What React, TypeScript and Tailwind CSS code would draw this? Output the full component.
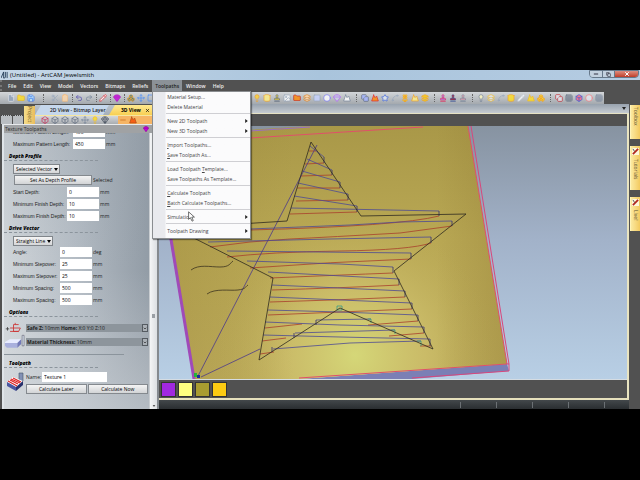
import { Fragment } from "react"
import { Box, Boxes, ChevronDown, Circle, Clipboard, Copy, Cylinder, Diamond, File, Folder, Flower2, Gem, Grid3x3, Hexagon, Image, Layers, Lightbulb, Minus, Mountain, Move, Pencil, Redo2, Save, Scissors, Spline, Square, Stamp, Star, Sun, Undo2, X } from "lucide-react"
import type { LucideIcon } from "lucide-react"

type Tool = [LucideIcon, string, string]

const toolGroups: { tools: Tool[]; gap: string }[] = [
    { gap: "w-[14px]", tools: [[File, "text-slate-100 fill-slate-400", "New"], [Folder, "text-yellow-500 fill-yellow-300", "Open"], [Save, "text-blue-600 fill-sky-200", "Save"]] },
    { gap: "w-[4px]", tools: [[Scissors, "text-slate-400", "Cut"], [Clipboard, "text-orange-300 fill-orange-200", "Paste"]] },
    { gap: "w-[4px]", tools: [[Undo2, "text-indigo-800", "Undo"], [Redo2, "text-slate-500", "Redo"]] },
    { gap: "w-[4px]", tools: [[Pencil, "text-red-600 fill-white", "Notes"]] },
    { gap: "w-[4px]", tools: [[Gem, "text-fuchsia-700 fill-fuchsia-600", "Reference help"]] },
    {
        gap: "w-[6px]",
        tools: [
            [Boxes, "text-amber-500 fill-sky-700", "Model"], [Move, "text-blue-500", "Move"], [Square, "text-blue-500", "Rectangle"], [Circle, "text-blue-500", "Circle"],
            [Hexagon, "text-blue-500", "Polygon"], [Spline, "text-blue-500", "Polyline"], [Grid3x3, "text-slate-500", "Grid"], [Copy, "text-slate-500", "Copy"],
            [Layers, "text-amber-500", "Layers"], [Diamond, "text-amber-500", "Facet"], [Sun, "text-amber-500", "Light"], [Image, "text-slate-500", "Image"],
        ],
    },
    {
        gap: "w-[8px]",
        tools: [
            [Lightbulb, "text-amber-500 fill-amber-300", "Relief light"], [Cylinder, "text-amber-500 fill-yellow-200", "Cylinder"], [Stamp, "text-slate-600 fill-yellow-300", "Stamp"],
            [Image, "text-slate-400 fill-white", "Import image"], [Folder, "text-red-700 fill-orange-400", "Merge"], [Layers, "text-amber-600 fill-orange-200", "Layers"],
            [Square, "text-slate-400 fill-indigo-200", "Smooth"], [Circle, "text-indigo-500 fill-white", "Dome"], [Gem, "text-purple-500 fill-slate-300", "Gem"], [Mountain, "text-slate-500 fill-white", "Sculpt"],
        ],
    },
    {
        gap: "w-[8px]",
        tools: [
            [Copy, "text-slate-600 fill-indigo-300", "Block copy"], [Mountain, "text-red-600 fill-orange-400", "Texture"], [Star, "text-blue-700 fill-slate-200", "Star"],
            [Spline, "text-slate-400", "Sweep"], [Flower2, "text-amber-500 fill-yellow-300", "Turn"], [Mountain, "text-amber-500 fill-yellow-200", "Spin"], [Layers, "text-amber-500 fill-yellow-400", "Weave"],
        ],
    },
    { gap: "w-[8px]", tools: [[Stamp, "text-rose-600 fill-violet-400", "Ring"], [Stamp, "text-blue-900 fill-red-700", "Setting"], [Stamp, "text-slate-500 fill-rose-300", "Claw"]] },
    {
        gap: "w-[8px]",
        tools: [
            [Lightbulb, "text-slate-500 fill-yellow-100", "Preview"], [Layers, "text-amber-400 fill-slate-200", "Stack"], [Spline, "text-slate-400", "Trace"], [Cylinder, "text-amber-500 fill-yellow-300", "Disc"],
            [Pencil, "text-slate-300 fill-white", "Draw"], [Mountain, "text-amber-400 fill-yellow-300", "Tube"], [Boxes, "text-amber-500 fill-yellow-300", "Blocks"],
        ],
    },
    {
        gap: "w-0",
        tools: [
            [Copy, "text-red-700 fill-slate-200", "Machine"], [Grid3x3, "text-slate-600", "Nest"], [Box, "text-blue-700 fill-rose-400", "Simulate"],
            [Circle, "text-red-400 fill-slate-200", "Drill"], [Grid3x3, "text-slate-500", "Array"],
        ],
    },
]

const viewTools: Tool[] = [
    [Box, "text-rose-700", "Isometric view"], [Box, "text-slate-600", "View along X"], [Box, "text-slate-600", "View along Y"], [Box, "text-slate-600", "View along Z"],
    [Move, "text-slate-500", "Fit"], [Lightbulb, "text-amber-400 fill-yellow-300", "Shading"], [Gem, "text-slate-800", "Draw"],
]

const menuBar = ["File", "Edit", "View", "Model", "Vectors", "Bitmaps", "Reliefs", "Toolpaths", "Window", "Help"]

// "_" marks the letter that is underlined, ">" an entry with a submenu
const menuItems = [
    ["Material Setup...", "Delete Material"],
    ["New 2D Toolpath>", "New 3D Toolpath>"],
    ["_Import Toolpaths...", "_Save Toolpath As..."],
    ["Load Toolpath _Template...", "Save Toolpaths As Template..."],
    ["_Calculate Toolpath", "_Batch Calculate Toolpaths..."],
    ["Simulation>"],
    ["Toolpath Drawing>"],
]

const bluePasses = [
    "M310 146L324 157", "M307 159L332 170", "M302 171L340 182", "M298 183L348 194", "M294 196L357 206", "M291 208L439 211",
    "M250 229L350 225L400 222L452 221", "M208 242L330 239L431 237", "M227 251L411 253", "M247 261L340 264L393 267", "M268 272L399 279",
    "M272 285L340 288L405 291", "M270 297L412 303", "M268 310L340 312L418 315", "M265 322L340 325L424 327", "M263 335L340 337L430 339",
    "M316 320L371 319", "M295 333L395 330", "M273 349L350 343L421 341",
]
const redPasses = [
    "M309 151H316", "M305 164L324 163", "M301 176L332 175", "M297 188H340", "M296 201L348 200", "M290 214L357 212",
    "M250 230Q400 226 439 216", "M210 247Q250 241 290 239T400 233L452 226", "M227 257Q270 252 340 251T431 243", "M250 268Q330 262 411 259",
    "M270 278Q340 275 393 273", "M272 290Q340 288 399 285", "M270 302Q340 300 405 297", "M268 315Q340 312 412 309", "M265 328L302 324M368 325L418 321",
    "M262 341L286 338M389 336L424 333", "M260 354L274 352M420 346H431",
]
// short moves that join one pass to the next
const steps = "M324 157V163M332 170V175M340 182V188M348 194V200M357 206V212M439 211V216M452 221V226M431 237V243M411 253V259M393 267V273M399 279V285M405 291V297M412 303V309M418 315V321M424 327V333M430 339V346M316 320V325M294 333V338M272 347V352"

const swatches = ["bg-[#a128e0]", "bg-[#ffff80]", "bg-[#a99c30]", "bg-[#fccb12]"]

function ToolButton({ tool }: { tool: Tool }) {
    const [Icon, color, label] = tool
    return (
        <button aria-label={label} className="flex w-[10px] shrink-0 justify-center opacity-80">
            <Icon className={`size-[8px] ${color}`} strokeWidth={2} />
        </button>
    )
}

function MenuItem({ label }: { label: string }) {
    const more = label.endsWith(">")
    const text = label.replace(">", "")
    const at = text.indexOf("_")
    return (
        <button className="flex h-[10px] w-full items-center justify-between whitespace-nowrap pl-[14px] pr-[2px] text-left text-[#444]">
            <span>
                {at < 0 ? text : <>{text.slice(0, at)}<u>{text[at + 1]}</u>{text.slice(at + 2)}</>}
            </span>
            {more && <svg viewBox="0 0 4 6" className="h-[4px] w-[3px]"><path d="M0 0L4 3L0 6Z" fill="#222" /></svg>}
        </button>
    )
}

function ToolpathsMenu() {
    return (
        <div className="absolute left-0 top-full z-20 w-[99px] border border-[#8a8d90] bg-linear-to-r from-[#e9eaee] from-[12px] to-[#fbfbfc] to-[13px] pb-[2px] shadow-[1px_1px_1px_#0006]">
            {menuItems.map((group, i) => (
                <Fragment key={i}>
                    {i > 0 && <div className="my-[1px] ml-[13px] h-[2px] border-t border-[#cfcfd3]"></div>}
                    {group.map((label) => <MenuItem key={label} label={label} />)}
                </Fragment>
            ))}
            <svg viewBox="0 0 12 18" className="absolute left-[35px] top-[119px] h-[11px] w-[7px]">
                <path d="M1 1V14L4 11L7 17L9 16L6.500 10H11Z" fill="#fff" stroke="#333" strokeWidth="1.200" />
            </svg>
        </div>
    )
}

function Field({ label, value, unit, width }: { label: string; value: string; unit: string; width: string }) {
    return (
        <label className="flex h-[12px] items-center whitespace-nowrap pl-[9px]">
            <span className={`font-['Liberation_Sans',sans-serif] ${width}`}>{label}</span>
            <input defaultValue={value} className="h-[10px] w-[32px] bg-white px-[2px] text-black" />
            <span className="pl-[1px]">{unit}</span>
        </label>
    )
}

function Heading({ children }: { children: string }) {
    return <h2 className="mt-[2px] flex h-[9px] w-[94px] items-center border-b border-dashed border-[#8b949c] pl-[5px] font-extrabold italic text-black">{children}</h2>
}

function Choice({ label, value, width }: { label: string; value: string; width: string }) {
    return (
        <div className={`relative ml-[9px] mt-[3px] ${width}`}>
            <select aria-label={label} className="block h-[10px] w-full appearance-none border border-[#80858a] bg-linear-to-b from-[#f5f5f5] to-[#d5d6d8] px-[2px] text-black">
                <option>{value}</option>
            </select>
            <svg viewBox="0 0 4 3" className="pointer-events-none absolute right-[2px] top-[4px] h-[3px] w-[4px]"><path d="M0 0H4L2 3Z" /></svg>
        </div>
    )
}

const panelButton = "h-[10px] border border-[#84898e] bg-linear-to-b from-[#f4f4f4] to-[#d2d4d6] text-center text-black"

function SummaryBar({ name, children }: { name: string; children: React.ReactNode }) {
    return (
        <div className="flex h-[8px] flex-1 items-center bg-[#8d959c]">
            <span className="flex-1 pl-[1px]">{children}</span>
            <button aria-label={`Expand ${name}`} className="flex h-[8px] w-[6px] items-center justify-center border border-[#555b61] bg-[#aab0b6]">
                <ChevronDown className="size-[5px]" strokeWidth={4} />
            </button>
        </div>
    )
}

function TexturePanel() {
    return (
        <section className="ml-[2px] flex flex-1 flex-col border-l-2 border-[#dfe4e8] bg-[#eceef0]">
            <header className="flex h-[9px] items-center justify-between border-t border-[#e8eaec] bg-[#a0a2a4] pl-[1px] pr-[10px] text-[#333]">
                <h1 className="font-['Noto_Sans','Open_Sans',sans-serif]">Texture Toolpaths</h1>
                <Gem className="size-[6px] fill-fuchsia-600 text-fuchsia-800" />
            </header>
            <div className="flex flex-1">
                <div className="flex-1 bg-linear-to-r from-[#d1d6da] via-[#b4bcc4] to-[#929ca6]">
                    <div className="h-[276px] overflow-hidden bg-linear-to-b from-[#929ca640] via-transparent to-[#d5d9dd80]">
                        <div className="-mt-[7px]">
                            <Field label="Minimum Pattern Length:" value="450" unit="mm" width="w-[60px]" />
                            <Field label="Maximum Pattern Length:" value="450" unit="mm" width="w-[60px]" />
                        </div>
                        <Heading>Depth Profile</Heading>
                        <Choice label="Depth profile" value="Selected Vector" width="w-[47px]" />
                        <div className="my-[1px] flex items-center pl-[10px]">
                            <button className={`w-[78px] ${panelButton}`}>Set As Depth Profile</button>
                            <span className="pl-[1px]">Selected</span>
                        </div>
                        <Field label="Start Depth:" value="0" unit="mm" width="w-[54px]" />
                        <Field label="Minimum Finish Depth:" value="10" unit="mm" width="w-[54px]" />
                        <Field label="Maximum Finish Depth:" value="10" unit="mm" width="w-[54px]" />
                        <Heading>Drive Vector</Heading>
                        <Choice label="Drive vector" value="Straight Line" width="w-[40px]" />
                        <Field label="Angle:" value="0" unit="deg" width="w-[47px]" />
                        <Field label="Minimum Stepover:" value="25" unit="mm" width="w-[47px]" />
                        <Field label="Maximum Stepover:" value="25" unit="mm" width="w-[47px]" />
                        <Field label="Minimum Spacing:" value="500" unit="mm" width="w-[47px]" />
                        <Field label="Maximum Spacing:" value="500" unit="mm" width="w-[47px]" />
                        <Heading>Options</Heading>
                        <div className="mt-[4px] flex h-[14px] items-center pr-[1px]">
                            <svg viewBox="0 0 22 14" className="h-[12px] w-[22px] pr-[3px]" fill="none">
                                <path d="M2 8H6M4 6V10" stroke="#444" />
                                <path d="M17 3H11V11H17L19 7H7M7 11H17M13 3V1" stroke="#c33" />
                            </svg>
                            <SummaryBar name="home position"><b>Safe Z:</b> 10mm <b>Home:</b> X:0 Y:0 Z:10</SummaryBar>
                        </div>
                        <div className="flex h-[14px] items-center pr-[1px]">
                            <svg viewBox="0 0 22 16" className="h-[16px] w-[22px] shrink-0 pr-[1px]">
                                <path d="M1 8L6 5H18L14 9H1Z" fill="#e8ecff" />
                                <path d="M1 9H14V14H3L1 12Z" fill="#a9b0dd" />
                                <path d="M14 9L18 5V10L14 14Z" fill="#7279b8" />
                                <path d="M19 1H21V12H19Z" fill="#dde6f2" stroke="#667" strokeWidth=".7" />
                            </svg>
                            <SummaryBar name="material"><b>Material Thickness:</b> 10mm</SummaryBar>
                        </div>
                        <hr className="mb-[4px] mt-[5px] w-[120px] border-[#8b949c]" />
                        <Heading>Toolpath</Heading>
                        <div className="mt-[4px] flex pr-[1px]">
                            <svg viewBox="0 0 20 20" className="h-[20px] w-[22px] shrink-0">
                                <path d="M14 1H18V9H14Z" fill="#8291b5" stroke="#456" strokeWidth=".6" />
                                <path d="M2 10L8 5L18 9L11 15Z" fill="#fff" />
                                <path d="M2 10L11 15V19L2 14Z" fill="#4b57a0" />
                                <path d="M11 15L18 9V13L11 19Z" fill="#27306c" />
                                <path d="M3 9L12 14M5 8L13 12M6 7L15 11M8 6L16 10" stroke="#d22" strokeWidth="1.200" />
                            </svg>
                            <div className="flex-1">
                                <label className="flex h-[10px] items-center">
                                    <span className="w-[16px]">Name:</span>
                                    <input defaultValue="Texture 1" className="h-[10px] w-[65px] bg-white px-[2px] text-black" />
                                </label>
                                <div className="mt-[2px] grid grid-cols-2 gap-px">
                                    <button className={panelButton}>Calculate Later</button>
                                    <button className={panelButton}>Calculate Now</button>
                                </div>
                            </div>
                        </div>
                    </div>
                </div>
                <div className="flex w-[8px] flex-col items-center justify-end border-l border-[#c8ccd0] bg-linear-to-r from-[#f4f5f6] to-[#dcdfe2]">
                    <div className="mb-[87px] h-[4px] w-[3px] bg-[#9a9fa4]"></div>
                    <svg viewBox="0 0 4 3" className="mb-[2px] h-[2px] w-[4px]"><path d="M0 0H4L2 3Z" fill="#555" /></svg>
                </div>
                <div className="w-[2px] bg-[#858a8f]"></div>
            </div>
        </section>
    )
}

function LeftColumn() {
    return (
        <div className="flex w-[159px] shrink-0 flex-col">
            <div className="flex h-[20px] overflow-hidden">
                <div className="flex w-[24px] items-end gap-px pl-[1px]">
                    <div className="h-[9px] w-[11px] border-t border-dotted border-[#444] bg-[#b9bdc1]"></div>
                    <div className="h-[9px] w-[10px] border-t border-dotted border-[#444] bg-[#b9bdc1]"></div>
                </div>
                <button className="mt-[2px] flex h-[18px] w-[11px] items-center bg-linear-to-r from-[#f5dc8a] to-[#e9bd5c] text-[#6b5a2a] [writing-mode:vertical-rl]">Project</button>
                <div className="flex-1 pt-[1px]">
                    <div className="flex h-[10px] bg-linear-to-b from-[#b9c2cc] to-[#a5afb9]">
                        <button className="w-[74px] whitespace-nowrap bg-[#c5d7ec] pl-[15px] text-left font-semibold text-[#222] [clip-path:polygon(6px_0,100%_0,calc(100%-6px)_100%,0_100%)]">2D View - Bitmap Layer</button>
                        <button className="flex w-[46px] items-center gap-[4px] bg-linear-to-b from-[#ffe98f] to-[#f8cf51] pl-[12px] font-bold text-black [clip-path:polygon(6px_0,100%_0,100%_100%,0_100%)]">
                            <span className="whitespace-nowrap">3D View</span>
                            <X className="size-[5px] shrink-0" strokeWidth={3} />
                        </button>
                    </div>
                    <div className="flex h-[9px] items-center border-t border-[#f5e6a0] bg-linear-to-b from-[#d5d8db] to-[#a9adb1] pl-[5px]">
                        {viewTools.map((tool) => <ToolButton key={tool[2]} tool={tool} />)}
                        <div className="ml-[8px] flex h-full flex-1 items-center bg-[#f6b565]">
                            <ToolButton tool={[Minus, "text-amber-700", "Show plane"]} />
                            <ToolButton tool={[Mountain, "text-orange-800 fill-orange-600", "Show relief"]} />
                        </div>
                    </div>
                </div>
            </div>
            <TexturePanel />
        </div>
    )
}

function Viewport() {
    return (
        <svg viewBox="159 126 468 253" className="block w-full" fill="none" role="img" aria-label="Star shaped texture toolpath on a gold relief">
            <defs>
                <linearGradient id="sky" x1="0" y1="0" x2="0" y2="1">
                    <stop offset="0" stopColor="#8793a1" />
                    <stop offset=".45" stopColor="#a2b2c9" />
                    <stop offset="1" stopColor="#b8cfe5" />
                </linearGradient>
                <linearGradient id="gold" x1="0" y1="0" x2="0" y2="1">
                    <stop offset="0" stopColor="#a99848" />
                    <stop offset=".45" stopColor="#b9a854" />
                    <stop offset="1" stopColor="#bfae5c" />
                </linearGradient>
                <radialGradient id="shine" gradientUnits="userSpaceOnUse" cx="355" cy="355" r="140">
                    <stop offset="0" stopColor="#d5d778" />
                    <stop offset=".5" stopColor="#cec06c" stopOpacity=".75" />
                    <stop offset="1" stopColor="#c0b05c" stopOpacity="0" />
                </radialGradient>
                <linearGradient id="shade" x1="0" y1="0" x2="1" y2="0">
                    <stop offset="0" stopColor="#8c7530" stopOpacity=".3" />
                    <stop offset=".4" stopColor="#8c7530" stopOpacity="0" />
                    <stop offset=".8" stopColor="#8c7530" stopOpacity="0" />
                    <stop offset="1" stopColor="#8c7530" stopOpacity=".35" />
                </linearGradient>
            </defs>
            <path d="M159 126H627V379H159Z" fill="url(#sky)" />
            <path d="M299 379L507 364L509 371L412 379Z" fill="#7b7fb5" />
            <path d="M152 136L310 126H468L507 364L299 379H194Z" fill="url(#gold)" />
            <path d="M152 136L310 126H468L507 364L299 379H194Z" fill="url(#shine)" />
            <path d="M152 136L310 126H468L507 364L299 379H194Z" fill="url(#shade)" />
            <path d="M154 136L194 379" stroke="#a04ab8" strokeWidth="3" />
            <path d="M250 131L310 127" stroke="#9a6fc0" />
            <path d="M250 138L423 127M468 126L507 364L299 378" stroke="#e0506a" />
            <path d="M471 126L509 364V371L412 378M507 364H509" stroke="#d8477c" />
            <g strokeWidth=".8">
                {redPasses.map((d) => <path key={d} d={d} stroke="#a8402c" />)}
                {bluePasses.map((d) => <path key={d} d={d} stroke="#4c4a94" />)}
                <path d={steps} stroke="#33306c" />
                <path d="M198 376L317 145M201 377L260 349" stroke="#4b3a8c" />
                <path d="M337 306H342V310H337ZM368 319H371V323M391 330H395V334M417 341H421V346" stroke="#3a9a86" />
                <path d="M311 142L361 216L466 214L394 271L433 349L340 308L259 360L273 278L180 231L240 224L287 221Z" stroke="#2e2a20" />
                <path d="M191 270C199 264 210 267 220 267S230 263 233 261M207 294C215 288 230 291 238 290S245 287 248 285" stroke="#3c3420" />
            </g>
            <path d="M194 373H197V377H194Z" fill="#25b53a" />
            <path d="M197 375H200V378H197Z" fill="#1a2c9c" />
        </svg>
    )
}

function SideTab({ label, marked, height }: { label: string; marked?: boolean; height: string }) {
    return (
        <button className={`flex items-center border-l border-[#fff3b8] bg-linear-to-r from-[#fbe9a0] to-[#f3ca5e] pt-[2px] text-[#5b5030] [writing-mode:vertical-rl] ${height}`}>
            {marked && (
                <svg viewBox="0 0 8 8" className="mb-[4px] size-[7px]">
                    <path d="M0 0H8V8H0Z" fill="#fdf6dc" />
                    <path d="M1 7L7 1" stroke="#b3261e" strokeWidth="2" />
                    <path d="M1 1L3 4" stroke="#444" />
                </svg>
            )}
            {label}
        </button>
    )
}

export default function App() {
    return (
        <div className="min-h-screen bg-black py-[70px] font-['Open_Sans','Noto_Sans',sans-serif] text-[5px] leading-[8px] text-[#222]">
            <div className="bg-[#515151]">
                <div className="flex h-[10px] items-center bg-linear-to-r from-[#c5d7e8] via-[#a9c4dc] to-[#b5cce2]">
                    <svg viewBox="0 0 8 9" className="ml-[1px] h-[8px] w-[7px]" fill="none" stroke="#223a55"><path d="M0 8L3 1V8M5 1V7Q5 8 3 8M7 1V8" /></svg>
                    <span className="flex-1 pl-[2px] text-[6px] text-black">(Untitled) - ArtCAM Jewelsmith</span>
                    <div className="mb-[2px] mr-[1px] flex h-[8px] overflow-hidden rounded-b-sm border border-[#66788a] text-[#334]">
                        <button aria-label="Minimize" className="flex w-[12px] items-center justify-center bg-[#c3d1df]"><Minus className="size-[6px]" strokeWidth={4} /></button>
                        <button aria-label="Restore" className="flex w-[13px] items-center justify-center border-x border-[#66788a] bg-[#c3d1df]"><Copy className="size-[5px]" strokeWidth={3} /></button>
                        <button aria-label="Close" className="flex w-[23px] items-center justify-center bg-linear-to-b from-[#dc8d80] to-[#bf3a26] text-white"><X className="size-[6px]" strokeWidth={4} /></button>
                    </div>
                </div>

                <nav className="flex h-[11px] items-stretch gap-px border-l-2 border-dotted border-[#777] pl-[3px] text-[#eee]">
                    {menuBar.map((name) => (
                        <div key={name} className={`relative flex ${name === "Toolpaths" ? "bg-[#8b9197] text-[#222]" : ""}`}>
                            <button className="px-[3px] font-semibold">{name}</button>
                            {name === "Toolpaths" && <div className="absolute left-0 top-full font-normal"><ToolpathsMenu /></div>}
                        </div>
                    ))}
                </nav>

                <div className="flex h-[13px] items-start pt-[1px]">
                    <div className="flex h-[12px] max-w-full items-center overflow-hidden bg-linear-to-b from-[#d3d6d9] to-[#a4a9ae] pl-[6px]">
                        {toolGroups.map((group, i) => (
                            <Fragment key={i}>
                                {group.tools.map((tool) => <ToolButton key={tool[2]} tool={tool} />)}
                                <div className={`flex shrink-0 justify-center ${group.gap}`}><div className="h-[8px] border-l border-dotted border-[#666]"></div></div>
                            </Fragment>
                        ))}
                    </div>
                </div>

                <div className="flex">
                    <LeftColumn />
                    <main className="flex min-w-0 flex-1 flex-col">
                        <div className="flex h-[10px] items-center justify-end border-b border-[#e6e2c4] bg-linear-to-b from-[#98a2ae] to-[#c6ccd2] pr-[3px]">
                            <svg viewBox="0 0 4 3" className="h-[3px] w-[4px]"><path d="M0 0H4L2 3Z" fill="#222" /></svg>
                        </div>
                        <div className="flex-1 border-r-2 border-[#e9e4c0]">
                            <div className="h-[12px]"></div>
                            <Viewport />
                            <div className="flex h-[19px] items-center gap-[2px] border-t border-[#d5dce2] px-[2px]">
                                {swatches.map((color) => <button key={color} aria-label="Palette colour" className={`size-[15px] border border-[#333] ${color}`}></button>)}
                            </div>
                        </div>
                        <div className="h-[2px] bg-[#e6e0bc]"></div>
                        <div className="flex h-[9px] items-center justify-end gap-[35px] bg-linear-to-b from-[#43484b] to-[#2a2e31] pr-[24px]">
                            {[0, 1, 2, 3, 4].map((n) => <div key={n} className="h-[6px] w-px bg-[#6b7074]"></div>)}
                        </div>
                    </main>
                    <aside className="flex w-[11px] flex-col gap-[7px] pl-[1px] pt-[1px]">
                        <SideTab label="Toolbox" height="h-[34px]" />
                        <SideTab label="Tutorials" marked height="h-[44px]" />
                        <SideTab label="Live!" marked height="h-[34px]" />
                    </aside>
                </div>
            </div>
        </div>
    )
}
